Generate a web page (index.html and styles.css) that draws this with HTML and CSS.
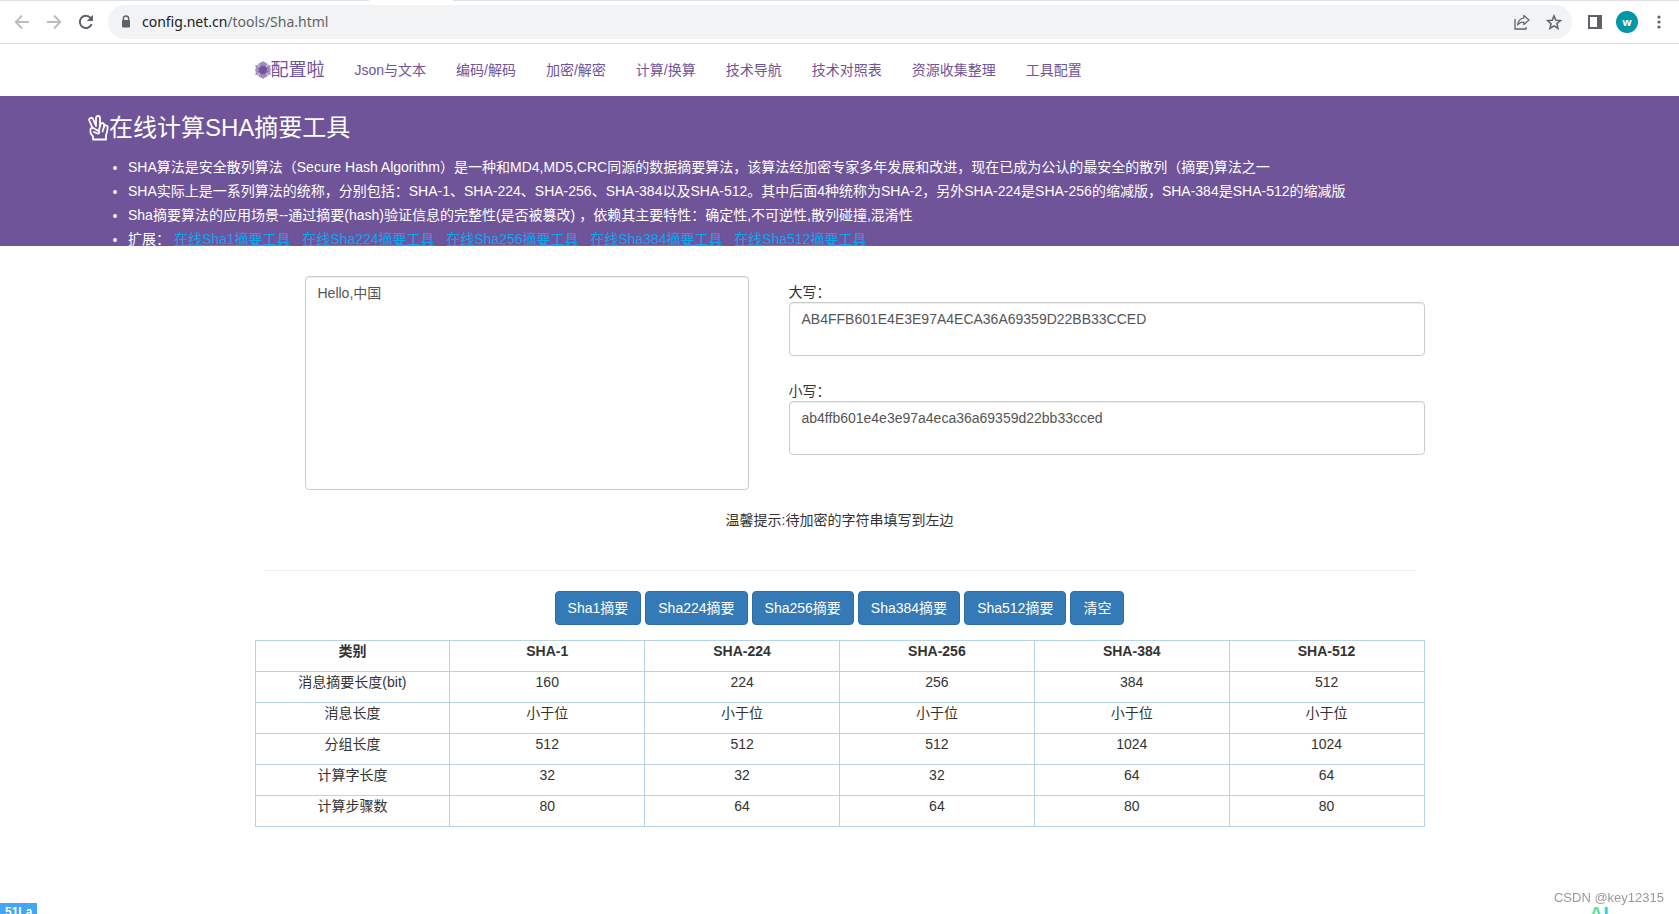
FILE: index.html
```html
<!DOCTYPE html>
<html lang="zh-CN">
<head>
<meta charset="utf-8">
<title>在线计算SHA摘要工具</title>
<link rel="stylesheet" href="styles.css">
</head>
<body>
<div class="browser">
  <div class="tab-edge"><span class="tab-edge-left"></span><span class="tab-edge-right"></span></div>
  <div class="toolbar">
    <button class="tool dim" aria-label="后退"><svg width="16" height="16" viewBox="0 0 16 16"><path d="M15 8H2M8 1.5 1.7 8 8 14.5" fill="none" stroke="currentColor" stroke-width="1.8"/></svg></button>
    <button class="tool dim" aria-label="前进"><svg width="16" height="16" viewBox="0 0 16 16"><path d="M1 8h13M8 1.5 14.3 8 8 14.5" fill="none" stroke="currentColor" stroke-width="1.8"/></svg></button>
    <button class="tool" aria-label="刷新"><svg width="16" height="16" viewBox="0 0 16 16"><path d="M13.6 10.2A6.1 6.1 0 1 1 12.6 4" fill="none" stroke="currentColor" stroke-width="2"/><path d="M15 .8V7H8.8z" fill="currentColor"/></svg></button>
    <div class="address">
      <svg class="lock" width="10" height="14" viewBox="0 0 10 14"><path d="M2.4 6V3.6a2.6 2.6 0 0 1 5.2 0V6" fill="none" stroke="currentColor" stroke-width="1.4"/><rect x="1" y="5" width="8" height="7.6" rx="1" fill="currentColor"/></svg>
      <span class="url"><span class="host">config.net.cn</span>/tools/Sha.html</span>
      <button class="tool" aria-label="分享"><svg width="16" height="16" viewBox="0 0 16 16"><path d="M1 5v10h11v-2" fill="none" stroke="currentColor" stroke-width="1.3"/><path d="M9.8 1.5 15 6l-5.2 4.500V8C7 8 5 9 3.600 11 4 7 6.300 4.500 9.800 4z" fill="none" stroke="currentColor" stroke-width="1.2" stroke-linejoin="round"/></svg></button>
      <button class="tool" aria-label="收藏"><svg width="16" height="16" viewBox="0 0 16 16"><path d="m8 1.900 1.800 4.300 4.700.4-3.600 3.100 1.100 4.600L8 11.800l-4 2.500 1.100-4.600L1.500 6.600l4.700-.4z" fill="none" stroke="currentColor" stroke-width="1.500"/></svg></button>
    </div>
    <button class="tool" aria-label="侧边栏"><svg width="14" height="14" viewBox="0 0 14 14"><path d="M0 0h14v14H0zM2 2v10h7V2z" fill="currentColor" fill-rule="evenodd"/></svg></button>
    <button class="avatar" aria-label="个人资料">w</button>
    <button class="tool more" aria-label="菜单"><svg width="4" height="14" viewBox="0 0 4 14" fill="currentColor"><circle cx="2" cy="2" r="1.600"/><circle cx="2" cy="7" r="1.600"/><circle cx="2" cy="12" r="1.600"/></svg></button>
  </div>
</div>

<nav class="navbar">
  <div class="container nav-row">
    <a class="brand" href="#"><svg width="16" height="18" viewBox="0 0 16 18"><path d="M8 .5 15.500 4.800v8.400L8 17.500.5 13.200V4.800z" fill="#c3b6d8"/><path d="M8 0v18M.5 4.500l15 9M.5 13.500l15-9M0 9h16M4 2l8 14M12 2 4 16M1 7l14 4M1 11l14-4M6 1l4 16M10 1 6 17" stroke="#6f5499" stroke-width=".7"/><circle cx="8" cy="9" r="4" fill="#6f5499"/></svg>配置啦</a>
    <a href="#">Json与文本</a>
    <a href="#">编码/解码</a>
    <a href="#">加密/解密</a>
    <a href="#">计算/换算</a>
    <a href="#">技术导航</a>
    <a href="#">技术对照表</a>
    <a href="#">资源收集整理</a>
    <a href="#">工具配置</a>
  </div>
</nav>

<header class="intro">
  <h1><svg width="21" height="26" viewBox="0 0 21 26" fill="none" stroke="currentColor" stroke-width="1.800" stroke-linejoin="round" stroke-linecap="round"><path d="M4.500 13 1.300 5.500a2 2 0 0 1 3.700-1.500L8 11V3a2 2 0 0 1 4 0v8l.8-2a1.800 1.800 0 0 1 3.400 1l-.3 1.800a1.800 1.800 0 0 1 3.700.7c0 3-.6 5-1.600 8V24.500H5V21.500L2.500 18V14.500c0-1.600 1.500-2 2.800-1.500l5.200 3c1.500 1 .5 3-1 2.500L6 17"/><path d="m12 11-1 4M16 12l-1.500 4.500"/></svg>在线计算SHA摘要工具</h1>
  <ul>
    <li>SHA算法是安全散列算法（Secure Hash Algorithm）是一种和MD4,MD5,CRC同源的数据摘要算法，该算法经加密专家多年发展和改进，现在已成为公认的最安全的散列（摘要)算法之一</li>
    <li>SHA实际上是一系列算法的统称，分别包括：SHA-1、SHA-224、SHA-256、SHA-384以及SHA-512。其中后面4种统称为SHA-2，另外SHA-224是SHA-256的缩减版，SHA-384是SHA-512的缩减版</li>
    <li>Sha摘要算法的应用场景--通过摘要(hash)验证信息的完整性(是否被篡改) ，依赖其主要特性：确定性,不可逆性,散列碰撞,混淆性</li>
    <li>扩展：&nbsp;<a href="#">在线Sha1摘要工具</a>&nbsp;&nbsp; <a href="#">在线Sha224摘要工具</a>&nbsp;&nbsp; <a href="#">在线Sha256摘要工具</a>&nbsp;&nbsp; <a href="#">在线Sha384摘要工具</a>&nbsp;&nbsp; <a href="#">在线Sha512摘要工具</a></li>
  </ul>
</header>

<main class="container">
  <div class="work">
    <textarea class="field source" aria-label="待加密的字符串">Hello,中国</textarea>
    <div class="results">
      <div class="result"><label for="upper">大写：</label><textarea class="field" id="upper">AB4FFB601E4E3E97A4ECA36A69359D22BB33CCED</textarea></div>
      <div class="result"><label for="lower">小写：</label><textarea class="field" id="lower">ab4ffb601e4e3e97a4eca36a69359d22bb33cced</textarea></div>
    </div>
  </div>
  <p class="tip">温馨提示:待加密的字符串填写到左边</p>
  <hr>
  <div class="actions">
    <button class="btn">Sha1摘要</button>
    <button class="btn">Sha224摘要</button>
    <button class="btn">Sha256摘要</button>
    <button class="btn">Sha384摘要</button>
    <button class="btn">Sha512摘要</button>
    <button class="btn">清空</button>
  </div>
  <table>
    <thead><tr><th>类别</th><th>SHA-1</th><th>SHA-224</th><th>SHA-256</th><th>SHA-384</th><th>SHA-512</th></tr></thead>
    <tbody>
      <tr><td>消息摘要长度(bit)</td><td>160</td><td>224</td><td>256</td><td>384</td><td>512</td></tr>
      <tr><td>消息长度</td><td>小于位</td><td>小于位</td><td>小于位</td><td>小于位</td><td>小于位</td></tr>
      <tr><td>分组长度</td><td>512</td><td>512</td><td>512</td><td>1024</td><td>1024</td></tr>
      <tr><td>计算字长度</td><td>32</td><td>32</td><td>32</td><td>64</td><td>64</td></tr>
      <tr><td>计算步骤数</td><td>80</td><td>64</td><td>64</td><td>80</td><td>80</td></tr>
    </tbody>
  </table>
</main>

<a class="stats" href="#">51La</a>
<div class="watermark">CSDN @key12315</div>
<div class="assistant">AI</div>
</body>
</html>
```
FILE: styles.css
```css
* { box-sizing: border-box; }

html { height: 100%; overflow: hidden; }

body {
  margin: 0;
  min-height: 100%;
  background: #fff;
  color: #333;
  font: 14px/20px "Liberation Sans", "Noto Sans CJK SC", sans-serif;
}

button { font: inherit; border: 0; padding: 0; background: none; cursor: pointer; }
a { color: inherit; text-decoration: none; }
svg { display: block; flex: none; }

/* browser toolbar */
.browser { border-bottom: 1px solid #dadce0; }
.tab-edge { display: flex; gap: 84px; height: 1px; }
.tab-edge-left { width: 22%; background: #dee1e6; }
.tab-edge-right { flex: 1; background: #dee1e6; }
.toolbar {
  display: flex;
  align-items: center;
  gap: 16px;
  padding: 4px 16px 4px 14px;
  color: #5f6368;
}
.tool { display: flex; color: #5f6368; }
.dim { color: #babcbe; }
.address {
  flex: 1;
  display: flex;
  align-items: center;
  gap: 16px;
  height: 34px;
  margin-left: -2px;
  padding: 0 10px 0 13px;
  border-radius: 17px;
  background: #f1f3f4;
}
.url { flex: 1; margin-left: -5px; font: 14px/20px "Noto Sans", sans-serif; }
.host { color: #202124; }
.avatar {
  width: 22px;
  height: 22px;
  margin-left: -2px;
  border-radius: 50%;
  background: #0097a7;
  color: #fff;
  font: bold 11px/20px "Noto Sans", sans-serif;
}
.more { padding: 0 2px 0 3px; }

/* site navigation */
.container { width: 1170px; max-width: 100%; margin: 0 auto; }
.navbar { color: #6f5499; }
.nav-row { display: flex; align-items: center; gap: 30px; height: 52px; }
.brand { display: flex; align-items: center; font-size: 18px; }

/* introduction */
.intro {
  height: 150px;
  padding: 16px 88px 0;
  overflow: hidden;
  background: #6f5499;
  color: #fff;
}
.intro h1 {
  display: flex;
  align-items: center;
  margin: 0 0 12px;
  font-size: 24px;
  font-weight: 400;
  line-height: 31px;
}
.intro ul { margin: 0; padding-left: 40px; line-height: 24px; }
.intro a { color: #03a9f4; text-decoration: underline; }

/* input and results */
.work {
  display: grid;
  grid-template-columns: minmax(0, 444fr) minmax(0, 636fr);
  align-items: start;
  gap: 40px;
  padding: 30px 0 0 50px;
}
.field {
  display: block;
  width: 100%;
  height: 54px;
  padding: 6px 12px;
  border: 1px solid #ccc;
  border-radius: 4px;
  background: #fff;
  box-shadow: inset 0 1px 1px rgba(0, 0, 0, .075);
  color: #555;
  font: inherit;
  resize: none;
  overflow: hidden;
}
.source { height: 214px; }
.results { display: grid; gap: 25px; padding-top: 6px; }
.result label { display: block; }
.tip { margin: 20px 0 40px; text-align: center; }
hr { margin: 0 10px 20px; border: 0; border-top: 1px solid #eee; }

.actions { display: flex; justify-content: center; gap: 4px; margin-bottom: 15px; }
.btn {
  padding: 6px 12px;
  border: 1px solid #2e6da4;
  border-radius: 4px;
  background: #337ab7;
  color: #fff;
}

table { width: 100%; table-layout: fixed; border-collapse: collapse; text-align: center; }
th, td { height: 31px; padding: 0 0 10px; border: 1px solid #b8d2e6; }

/* floating widgets */
.stats {
  position: fixed;
  left: 0;
  bottom: -7px;
  padding: 0 5px;
  background: #42a5f5;
  color: #fff;
  font-size: 12px;
  font-weight: 700;
  line-height: 18px;
}
.watermark {
  position: fixed;
  right: 15px;
  bottom: 6px;
  color: #999;
  font: 13px/20px "Liberation Sans", sans-serif;
}
.assistant {
  position: fixed;
  right: 70px;
  bottom: -12px;
  background: linear-gradient(90deg, #7bed6b, #19d3f0);
  background-clip: text;
  color: transparent;
  font: bold 20px/24px "Liberation Sans", sans-serif;
}
```
